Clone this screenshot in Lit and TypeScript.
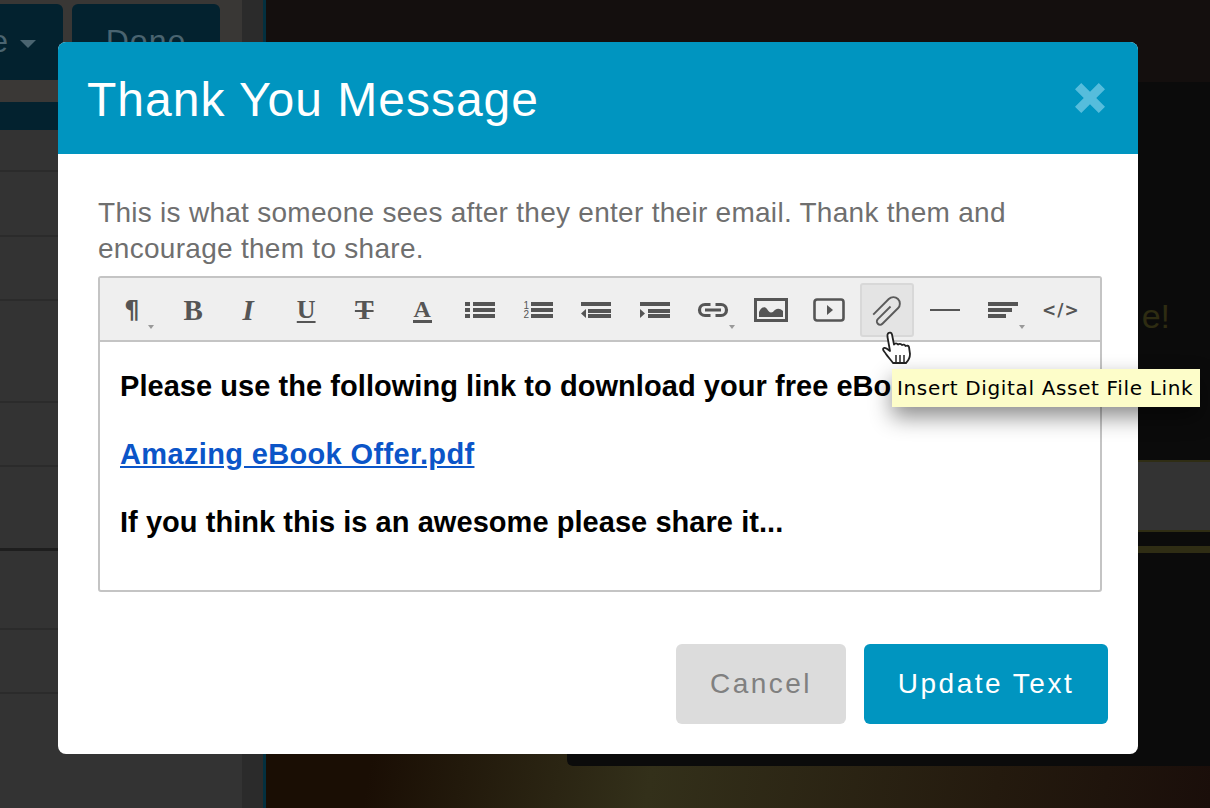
import { LitElement, html, css, svg } from "lit";
import { customElement } from "lit/decorators.js";

const ICON = (w: number, h: number, body: unknown) =>
  html`<svg class="ic" width=${w} height=${h} viewBox="0 0 ${w} ${h}">${body}</svg>`;

const bars = (rows: number[][]) =>
  rows.map(([x, y, w, h]) => svg`<rect x=${x} y=${y} width=${w} height=${h} fill="#555"></rect>`);

const icons = {
  ul: ICON(30, 16, bars([[0,0,5,4],[8,0,22,4],[0,6,5,4],[8,6,22,4],[0,12,5,4],[8,12,22,4]])),
  ol: html`<span class="ol"><span class="nums"><span>1</span><span>2</span></span>${ICON(22, 16, bars([[0,0,22,4],[0,6,22,4],[0,12,22,4]]))}</span>`,
  outdent: ICON(30, 16, svg`${bars([[0,0,30,4],[7,7,23,4],[7,12,23,4]])}<path d="M5 7v9L0 11.500z" fill="#555"></path>`),
  indent: ICON(30, 16, svg`${bars([[0,0,30,4],[8,7,22,4],[8,12,22,4]])}<path d="M0 7v9l5-4.500z" fill="#555"></path>`),
  link: ICON(34, 18, svg`<path d="M14.500 3.500H9a5.500 5.500 0 0 0 0 11h5.500M19.500 3.500H25a5.500 5.500 0 0 1 0 11h-5.500M9 9h16" fill="none" stroke="#555" stroke-width="3.200"></path>`),
  image: ICON(34, 24, svg`<rect x="1.500" y="1.500" width="31" height="21" fill="none" stroke="#555" stroke-width="3"></rect><path d="M5 19v-5c2-5 6-6 8-3 2 3 3 4 6 3 2-3 6-5 10-1v6z" fill="#555"></path>`),
  video: ICON(32, 24, svg`<rect x="1.500" y="1.500" width="29" height="21" rx="2.500" fill="none" stroke="#555" stroke-width="2.600"></rect><path d="M14 7v10l6-5z" fill="#555"></path>`),
  clip: ICON(32, 32, svg`<path transform="translate(16 16) rotate(45) translate(-14 -12)" d="M14 7V25a3.250 3.250 0 0 0 6.500 0V3a6.500 6.500 0 0 0-13 0V25" fill="none" stroke="#5a5a5a" stroke-width="1.900"></path>`),
  hr: ICON(30, 2, bars([[0,0,30,2]])),
  align: ICON(30, 16, bars([[0,0,30,4],[0,6,24,4],[0,12,18,4]])),
};

type Tool = { t?: string; cls?: string; icon?: unknown; caret?: boolean; active?: boolean };
const tools: Tool[] = [
  { t: "¶", cls: "g para", caret: true },
  { t: "B", cls: "g bold" },
  { t: "I", cls: "g ital" },
  { t: "U", cls: "g under" },
  { t: "T", cls: "g strike" },
  { t: "A", cls: "g color" },
  { icon: icons.ul },
  { icon: icons.ol },
  { icon: icons.outdent },
  { icon: icons.indent },
  { icon: icons.link, caret: true },
  { icon: icons.image },
  { icon: icons.video },
  { icon: icons.clip, active: true },
  { icon: icons.hr },
  { icon: icons.align, caret: true },
  { t: "</>", cls: "code" },
];

@customElement("app-root")
export class AppRoot extends LitElement {
  static styles = css`
    :host { display: block; width: 1210px; height: 808px; overflow: hidden; position: relative; background: #140f0e; font-family: "Liberation Sans", Arial, sans-serif; }
    * { box-sizing: border-box; }

    .bg { display: grid; grid-template-columns: 242px 21px 3px 1fr; height: 808px; }
    .side { background: #333; display: flex; flex-direction: column; }
    .topbtns { display: flex; gap: 9px; height: 80px; padding-top: 4px; background: #393735; }
    .dbtn { background: #03222f; border-radius: 0 6px 6px 0; height: 76px; width: 63px; color: #4a6470; font-size: 32px; display: flex; align-items: flex-start; justify-content: flex-end; padding: 19px 27px 0 0; gap: 12px; overflow: hidden; flex: none; }
    .dbtn.done { width: 148px; border-radius: 6px; justify-content: center; padding: 19px 0 0; letter-spacing: 1px; }
    .caret1 { width: 0; height: 0; border: 8px solid transparent; border-top-color: #4a6470; margin-top: 17px; flex: none; }
    .stripg { height: 22px; background: #3a3836; }
    .stript { height: 28px; background: #03222f; }
    .row { border-bottom: 2px solid #2b2b2b; background: #333; flex: none; }
    .row.strong { border-bottom: 3px solid #1e1e1e; }
    .gut { background: #2b2b2b; }
    .edge { background: #04303f; }
    .stage { display: flex; flex-direction: column; background: linear-gradient(100deg, #1a0e04 0%, #1a0e04 22%, #33301a 48%, #241a0e 80%, #1a0e0a 100%); position: relative; }
    .stagetop { height: 82px; background: #140f0e; flex: none; }
    .panel { flex: none; height: 684px; margin-left: 301px; background: #0b0b0b; border-radius: 0 0 0 6px; position: relative; display: flex; flex-direction: column; padding: 378px 0 0 0; }
    .excl { position: absolute; right: 40px; top: 215px; color: #2e2c12; font-size: 34px; }
    .field { height: 72px; background: #333; border-top: 2px solid #2f2d14; border-bottom: 2px solid #2f2d14; }
    .rule { height: 7px; margin-top: 14px; background: #2f2d14; }

    .modal { position: absolute; left: 58px; top: 42px; width: 1080px; height: 712px; background: #fff; border-radius: 8px; overflow: hidden; display: flex; flex-direction: column; }
    .head { height: 112px; background: #0095c0; display: flex; align-items: center; justify-content: space-between; padding: 2px 33px 0 29px; flex: none; }
    h1 { margin: 0; font-weight: 400; font-size: 48px; letter-spacing: 1px; color: #fff; }
    .x { display: block; margin-top: -2px; }
    .body { padding: 41px 36px 0 40px; flex: 1; display: flex; flex-direction: column; }
    .lead { margin: 0; font-size: 28px; line-height: 36px; letter-spacing: 0.28px; color: #6f6f6f; height: 81px; }
    .editor { width: 1004px; height: 316px; border: 2px solid #c4c4c4; border-radius: 3px; flex: none; }
    .bar { display: grid; grid-template-columns: repeat(17, 1fr); height: 64px; padding: 5px 10px 5px 3px; background: #efefef; border-bottom: 2px solid #c4c4c4; }
    .tool { position: relative; display: flex; align-items: center; justify-content: center; width: 54px; height: 54px; margin-left: 2px; border: 2px solid transparent; border-radius: 3px; color: #555; }
    .tool.active { background: #e4e4e4; border-color: #d8d8d8; }
    .tcaret { position: absolute; left: 41px; top: 40px; width: 0; height: 0; border: 3px solid transparent; border-top: 4px solid #999; }
    .g { font-family: "Liberation Serif", serif; font-size: 29px; font-weight: 700; line-height: 1; display: block; }
    .para { font-family: "DejaVu Sans", sans-serif; font-size: 24px; }
    .bold { position: relative; left: 3px; }
    .ital { font-style: italic; }
    .under { font-size: 26px; font-weight: 700; text-decoration: underline; text-underline-offset: 3px; text-decoration-thickness: 2px; }
    .strike { text-decoration: line-through; text-decoration-thickness: 2px; font-size: 28px; }
    .color { font-size: 24px; border-bottom: 3px solid #555; line-height: 22px; padding: 0 1px; }
    .code { font-family: "DejaVu Sans", sans-serif; font-size: 17px; font-weight: 700; letter-spacing: 1px; }
    .ic { display: block; }
    .ol { display: flex; align-items: center; gap: 1px; }
    .nums { display: flex; flex-direction: column; font-size: 10px; line-height: 9px; color: #555; width: 7px; }
    .content { padding: 24px 20px 0; color: #000; font-size: 29px; font-weight: 700; line-height: 40px; letter-spacing: 0.05px; }
    .content p { margin: 0 0 28px; white-space: nowrap; }
    .content a { color: #0b55c8; text-decoration: underline; letter-spacing: 0.35px; }
    .foot { display: flex; justify-content: flex-end; gap: 18px; padding: 52px 30px 0 0; margin-right: -36px; margin-left: -40px; }
    .btn { height: 80px; border-radius: 6px; display: flex; align-items: center; justify-content: center; font-size: 28px; letter-spacing: 2.5px; }
    .cancel { width: 170px; background: #dcdcdc; color: #808080; }
    .update { width: 244px; background: #0095c0; color: #fff; }

    .tip { position: absolute; left: 892px; top: 369px; width: 308px; height: 38px; background: #fdfdc9; color: #000; font-family: "DejaVu Sans", sans-serif; font-size: 20px; letter-spacing: 0.65px; line-height: 38px; padding-left: 5px; white-space: nowrap; box-shadow: 0 10px 22px rgba(0,0,0,.45); }
    .hand { position: absolute; left: 881px; top: 331px; }
  `;

  render() {
    return html`
      <div class="bg">
        <div class="side">
          <div class="topbtns">
            <div class="dbtn">e<span class="caret1"></span></div>
            <div class="dbtn done">Done</div>
          </div>
          <div class="stripg"></div>
          <div class="stript"></div>
          <div class="row" style="height:42px"></div>
          <div class="row" style="height:65px"></div>
          <div class="row" style="height:64px"></div>
          <div class="row" style="height:102px"></div>
          <div class="row" style="height:64px"></div>
          <div class="row strong" style="height:84px"></div>
          <div class="row" style="height:79px"></div>
          <div class="row" style="height:64px"></div>
        </div>
        <div class="gut"></div>
        <div class="edge"></div>
        <div class="stage">
          <div class="stagetop"></div>
          <div class="panel">
            <span class="excl">e!</span>
            <div class="field"></div>
            <div class="rule"></div>
          </div>
        </div>
      </div>

      <div class="modal">
        <div class="head">
          <h1>Thank You Message</h1>
          <svg class="x" width="30" height="30" viewBox="3 3 24 24"><path d="M3 8 8 3l7 7 7-7 5 5-7 7 7 7-5 5-7-7-7 7-5-5 7-7z" fill="#56bddc"></path></svg>
        </div>
        <div class="body">
          <p class="lead">This is what someone sees after they enter their email. Thank them and encourage them to share.</p>
          <div class="editor">
            <div class="bar">
              ${tools.map((x) => html`
                <div class="tool ${x.active ? "active" : ""}">
                  ${x.t ? html`<span class=${x.cls ?? ""}>${x.t}</span>` : x.icon}
                  ${x.caret ? html`<span class="tcaret"></span>` : ""}
                </div>`)}
            </div>
            <div class="content">
              <p>Please use the following link to download your free eBook!</p>
              <p><a>Amazing eBook Offer.pdf</a></p>
              <p>If you think this is an awesome please share it...</p>
            </div>
          </div>
          <div class="foot">
            <div class="btn cancel">Cancel</div>
            <div class="btn update">Update Text</div>
          </div>
        </div>
      </div>

      <div class="tip">Insert Digital Asset File Link</div>
      <svg class="hand" width="36" height="38" viewBox="0 0 36 38">
        <path d="M7 2.500c1.500-1.500 3.500-1 4 1l2 10c1-1.500 3-1.500 4 0 1-1 3-1 4 .500 1-.800 3-.500 3.500 1 1.500-.500 3-.500 3.500 1l1 7c0 4-2 7-4 9H12c-2-3-5-6-7-9-1-2-3-3-3-5 .500-1.500 2-1.500 3.500-.500L9 20 6.500 6c-.200-1.500 0-3 .500-3.500z" fill="#fff" stroke="#222" stroke-width="1.800" stroke-linejoin="round"></path>
        <path d="M15 24v7M19 24v7M23 24v7" stroke="#333" stroke-width="1.600"></path>
      </svg>
    `;
  }
}
